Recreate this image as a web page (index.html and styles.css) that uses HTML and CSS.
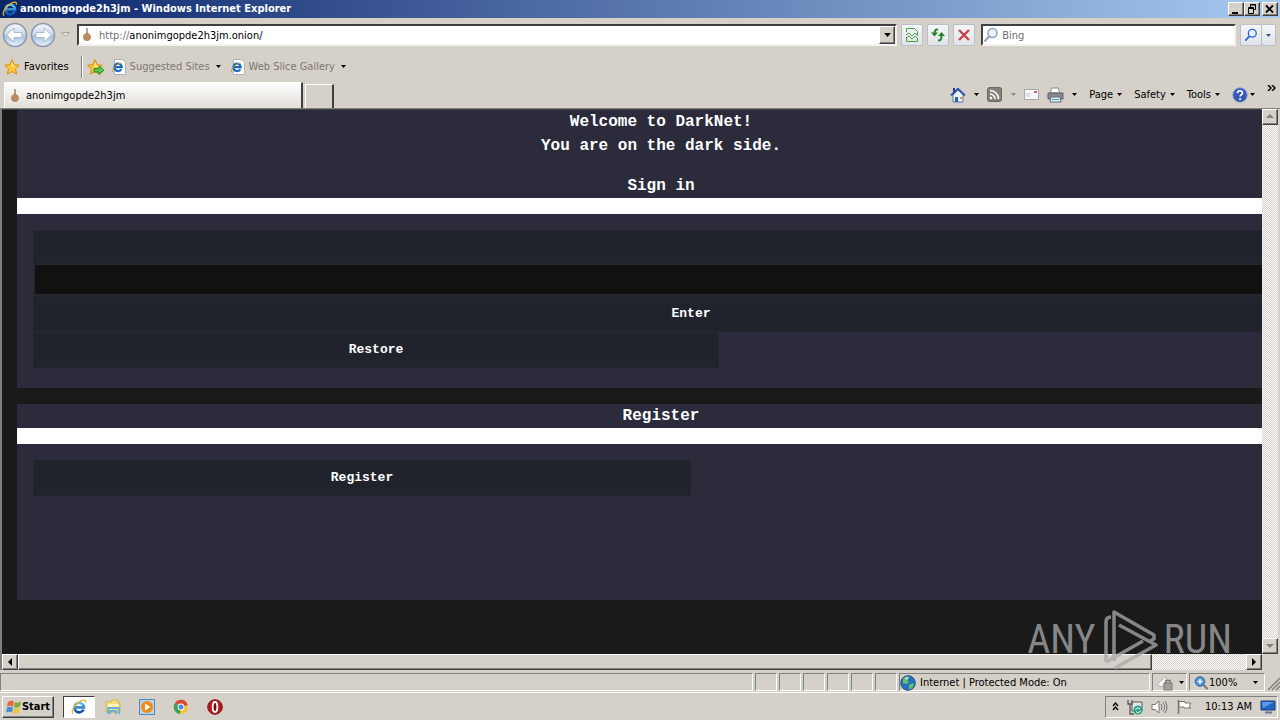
FILE: index.html
```html
<!DOCTYPE html>
<html lang="en">
<head>
    <meta charset="UTF-8">
    <meta name="viewport" content="width=device-width, initial-scale=1.0">
    <title>anonimgopde2h3jm</title>
    <link rel="stylesheet" href="styles.css">
</head>
<body>
    <!-- shared icons -->
    <svg width="0" height="0" class="defs" aria-hidden="true">
        <defs>
            <linearGradient id="ball" x1="0" y1="0" x2="0" y2="1">
                <stop offset="0" stop-color="#f4f8fc"/>
                <stop offset="0.45" stop-color="#cfdcec"/>
                <stop offset="0.55" stop-color="#a9c0dc"/>
                <stop offset="1" stop-color="#eaf6ff"/>
            </linearGradient>
            <linearGradient id="blue" x1="0" y1="0" x2="0" y2="1">
                <stop offset="0" stop-color="#5cc4f4"/>
                <stop offset="1" stop-color="#0a4fb4"/>
            </linearGradient>
        </defs>
        <symbol id="ie" viewBox="0 0 16 16">
            <path d="M12.600 10.500A4.800 4.800 0 1 1 13 8.400H4.500" fill="none" stroke="url(#blue)" stroke-width="2.600"/>
            <path d="M2.200 14.600C-1 13 4 4.500 10 1.800c3.500-1.500 5-.4 4.200 2" fill="none" stroke="#e6b422" stroke-width="1.300"/>
        </symbol>
        <symbol id="ie-page" viewBox="0 0 16 16">
            <path d="M3.500 .5h8l3 3v12h-11z" fill="#fff" stroke="#a9b2bd"/>
            <path d="M10.300 10.200A3.700 3.700 0 1 1 10.800 8.200H4" fill="none" stroke="#1769c4" stroke-width="2.200"/>
            <path d="M1.600 13C0 11 5 4.500 11 4" fill="none" stroke="#d8a51c"/>
        </symbol>
        <symbol id="onion" viewBox="0 0 16 16">
            <path d="M8 1v6" stroke="#8a6a48" stroke-width="1.200"/>
            <path d="M8 5c1 1.500 4 2 4 5 0 2.500-2 4-4 4s-4-1.500-4-4c0-3 3-3.500 4-5z" fill="#b98a62"/>
        </symbol>
        <symbol id="star" viewBox="0 0 16 16">
            <path d="M8 .8l2.200 4.900 5.200.6-3.900 3.600 1.100 5.300L8 12.500l-4.600 2.700 1.100-5.300L.6 6.300l5.200-.6z" fill="#ffc83a" stroke="#d98e14"/>
            <path d="M8 3l1.400 3.600L12 7 8 8z" fill="#fff3b0"/>
        </symbol>
        <symbol id="caret" viewBox="0 0 5 3"><path d="M0 0h5L2.500 3z" fill="currentColor"/></symbol>
        <symbol id="lens" viewBox="0 0 16 16">
            <circle cx="9.500" cy="6" r="4.500" fill="#e8f2fb" stroke="currentColor" stroke-width="1.500"/>
            <path d="M6.300 9.300L1.500 14.500" stroke="currentColor" stroke-width="2"/>
        </symbol>
    </svg>

    <header class="titlebar">
        <svg class="icon"><use href="#ie"/></svg>
        <span class="window-title">anonimgopde2h3jm - Windows Internet Explorer</span>
        <div class="window-buttons">
            <button class="raised" aria-label="Minimize"><svg width="10" height="10"><path d="M1 8h6v2H1z"/></svg></button>
            <button class="raised" aria-label="Restore window"><svg width="10" height="10" fill="none" stroke="#000"><path d="M3.500 3V.5h5v5H7M3 1h6M1.500 3.500h5v6h-5zM1 4.500h6"/></svg></button>
            <button class="raised close" aria-label="Close"><svg width="10" height="10"><path d="M1 1.500l7 7M8 1.500l-7 7" stroke="#000" stroke-width="1.800"/></svg></button>
        </div>
    </header>

    <nav class="navbar">
        <button class="ball" aria-label="Back">
            <svg width="26" height="26"><circle cx="13" cy="13" r="11.500" fill="url(#ball)" stroke="#8b9ab0" stroke-width="1.500"/><path d="M4.500 13l7.500-7v4.500h8v5h-8V20z" fill="#fff" stroke="#a9bcd4"/></svg>
        </button>
        <button class="ball" aria-label="Forward">
            <svg width="26" height="26"><circle cx="13" cy="13" r="11.500" fill="url(#ball)" stroke="#8b9ab0" stroke-width="1.500"/><path d="M21.500 13L14 6v4.500H6v5h8V20z" fill="#fff" stroke="#a9bcd4"/></svg>
        </button>
        <button class="recent" aria-label="Recent pages"><svg width="9" height="6"><path d="M.5 .5h8l-4 4z" fill="#e2ded8" stroke="#aaa59c"/></svg></button>
        <div class="field address">
            <svg class="icon"><use href="#onion"/></svg>
            <label for="address">http://</label>
            <input type="text" id="address" value="anonimgopde2h3jm.onion/">
            <button class="raised drop" aria-label="Show addresses"><svg class="caret big"><use href="#caret"/></svg></button>
        </div>
        <button class="tool" aria-label="Compatibility view"><svg width="14" height="16" fill="none" stroke="#46a049"><path d="M1.500 5V1.500h8l3 3V9M1.500 10v4.500h11V12M1 8l3-2 3 3 3-3 3 3M1 11l3-2 3 3 3-3 3 3"/></svg></button>
        <button class="tool" aria-label="Refresh"><svg width="16" height="16" fill="none" stroke="#23842a" stroke-width="2"><path d="M8 2.500C5.500 2 4.500 4 4.500 7M8 13.500c2.500.5 3.500-1.500 3.500-4.500"/><path d="M1 5.500h7L4.500 9.500zM8 9h7l-3.500-4z" fill="#23842a" stroke="none"/></svg></button>
        <button class="tool" aria-label="Stop"><svg width="14" height="14"><path d="M2 2l10 10M12 2L2 12" stroke="#c8434a" stroke-width="2.400"/></svg></button>
        <div class="field search">
            <svg class="icon"><use href="#lens"/></svg>
            <input type="text" placeholder="Bing" aria-label="Search Bing">
        </div>
        <div class="search-buttons">
            <button class="tool go" aria-label="Search"><svg class="icon small"><use href="#lens"/></svg></button>
            <button class="tool more" aria-label="Search options"><svg class="caret"><use href="#caret"/></svg></button>
        </div>
    </nav>

    <div class="favorites">
        <button class="flat fav"><svg class="icon"><use href="#star"/></svg>Favorites</button>
        <span class="divider"></span>
        <button class="flat add" aria-label="Add to Favorites bar"><svg width="18" height="16" viewBox="0 0 18 16"><use href="#star" width="16" height="16"/><path d="M7 9.500h5V7l5 4.200-5 4.300V13H7z" fill="#5fc548" stroke="#2d8a24"/></svg></button>
        <button class="flat muted"><svg class="icon"><use href="#ie-page"/></svg>Suggested Sites<svg class="caret"><use href="#caret"/></svg></button>
        <button class="flat muted"><svg class="icon"><use href="#ie-page"/></svg>Web Slice Gallery<svg class="caret"><use href="#caret"/></svg></button>
    </div>

    <div class="tabs">
        <button class="tab"><svg class="icon"><use href="#onion"/></svg>anonimgopde2h3jm</button>
        <button class="new-tab" aria-label="New tab"></button>
        <div class="commands">
            <button class="flat home" aria-label="Home"><svg width="16" height="16"><path d="M3 8v7h10V8L8 3z" fill="#e9f1fb" stroke="#5a78b0"/><path d="M1 8.500L8 1.800l7 6.700" fill="none" stroke="#2f57ac" stroke-width="1.800"/><path d="M3 1h2v4H3z" fill="#263f88"/><path d="M5 10h3v5H5z" fill="#2f62a8"/><path d="M10 10h2v2h-2z" fill="#d8962a"/></svg><svg class="caret"><use href="#caret"/></svg></button>
            <button class="flat feeds" aria-label="Feeds"><svg width="15" height="15"><rect x=".5" y=".5" width="14" height="14" rx="2" fill="#85827e" stroke="#69665f"/><path d="M3 7a5 5 0 0 1 5 5M3 3.500A8.500 8.500 0 0 1 11.500 12" fill="none" stroke="#fff" stroke-width="1.600"/><circle cx="4" cy="11" r="1.300" fill="#fff"/></svg><svg class="caret"><use href="#caret"/></svg></button>
            <button class="flat mail" aria-label="Read mail"><svg width="15" height="11"><path d="M.5 .5h14v10H.5z" fill="#f6f6f8" stroke="#aaa8a8"/><path d="M10 2h3v2h-3z" fill="#cf5b66"/><path d="M2 5h5M2 7h4" stroke="#cacad2"/></svg></button>
            <button class="flat print" aria-label="Print"><svg width="17" height="16"><path d="M4.500 1h7l1 5h-9z" fill="#fff" stroke="#8b8b8b"/><path d="M1 6h15v6H1z" fill="#85898e" stroke="#5d6268"/><path d="M4 10h9l1 5H3z" fill="#e4eef2" stroke="#617078"/><path d="M5 12.500h7" stroke="#40a0b0"/></svg><svg class="caret"><use href="#caret"/></svg></button>
            <button class="flat">Page<svg class="caret"><use href="#caret"/></svg></button>
            <button class="flat">Safety<svg class="caret"><use href="#caret"/></svg></button>
            <button class="flat">Tools<svg class="caret"><use href="#caret"/></svg></button>
            <button class="flat help" aria-label="Help"><svg width="16" height="16"><circle cx="8" cy="8" r="7.300" fill="#3458b4" stroke="#96aad8"/><path d="M5.500 6.200c0-3.200 5-3.200 5-.2 0 1.800-2.400 1.700-2.400 3.600" fill="none" stroke="#fff" stroke-width="1.700"/><circle cx="8.100" cy="12" r="1.100" fill="#fff"/></svg><svg class="caret"><use href="#caret"/></svg></button>
            <button class="flat overflow" aria-label="More commands"><svg width="9" height="6" fill="none" stroke="#000" stroke-width="1.500"><path d="M1 0l3 3-3 3M5 0l3 3-3 3"/></svg></button>
        </div>
    </div>

    <div class="browser">
        <main class="viewport">
            <div class="page">
                <section class="block">
                    <h1>Welcome to DarkNet!<br>You are on the dark side.</h1>
                    <h2>Sign in</h2>
                    <div class="line"></div>
                    <form class="panel">
                        <input type="text" class="wide login" aria-label="Login">
                        <input type="password" class="wide password" aria-label="Password">
                        <button type="button" class="wide">Enter</button>
                        <button type="button" class="restore">Restore</button>
                    </form>
                </section>
                <section class="block">
                    <h2>Register</h2>
                    <div class="line"></div>
                    <div class="panel tall">
                        <button type="button" class="register">Register</button>
                    </div>
                </section>
            </div>
        </main>
        <div class="scroll vertical">
            <button class="raised" aria-label="Scroll up"><svg class="arrow off"><path d="M0 5h8L4 1z"/></svg></button>
            <button class="raised" aria-label="Scroll down"><svg class="arrow off"><path d="M0 2h8L4 6z"/></svg></button>
        </div>
        <div class="scroll horizontal">
            <button class="raised" aria-label="Scroll left"><svg class="arrow"><path d="M6 0v8L2 4z"/></svg></button>
            <div class="track"><div class="raised thumb"></div></div>
            <button class="raised" aria-label="Scroll right"><svg class="arrow"><path d="M2 0v8l4-4z"/></svg></button>
        </div>
        <div class="watermark">
            <span>ANY</span>
            <svg width="56" height="62" viewBox="0 0 56 62" fill="none" stroke="currentColor" stroke-width="3.500" stroke-linejoin="round">
                <path d="M4 53V13q0-5 5-5M12 50V3l40 23v4l-4 2"/>
                <path d="M17 16l37 20L13 59M4 53l37-21M12 40v12"/>
            </svg>
            <span>RUN</span>
        </div>
    </div>

    <footer class="status">
        <div class="pane grow"></div>
        <div class="pane"></div>
        <div class="pane"></div>
        <div class="pane"></div>
        <div class="pane"></div>
        <div class="pane"></div>
        <div class="pane"></div>
        <div class="pane zone">
            <svg width="16" height="16"><circle cx="8" cy="8" r="7.300" fill="#2372bd" stroke="#24578c"/><path d="M3 4c2-3 5-3 6-2L7 5l2 2-2 2-4-1zM9 10l4-2 1 2-3 4H9z" fill="#65c464"/><path d="M5 3l4-1-2 3z" fill="#c9eef0"/></svg>
            Internet | Protected Mode: On
        </div>
        <div class="pane privacy">
            <svg width="18" height="16"><path d="M1 10l8-8 2 2-5 8z" fill="#f6f6f6" stroke="#b6b2ac"/><path d="M8 8h8v7H8z" fill="#a2a09d" stroke="#7a7875"/><path d="M10 8V5.500h4V8" fill="none" stroke="#7a7875" stroke-width="1.500"/></svg>
            <svg class="caret"><use href="#caret"/></svg>
        </div>
        <div class="pane zoom">
            <svg width="14" height="14"><circle cx="6" cy="5.500" r="4.800" fill="#4f92df" stroke="#3465a8"/><path d="M6 3v5M3.500 5.500h5" stroke="#fff" stroke-width="1.500"/><path d="M9.500 9l4 4" stroke="#7c7467" stroke-width="2"/></svg>
            <span>100%</span>
            <svg class="caret"><use href="#caret"/></svg>
        </div>
        <svg class="grip" width="13" height="16"><path d="M1 15L13 3M5 15l8-8M9 15l4-4" stroke="#808080" stroke-width="1.500"/></svg>
    </footer>

    <footer class="taskbar">
        <button class="raised start">
            <svg width="16" height="16"><path d="M2 3q3-2 6-.5L7 7.500Q4 6 1 7.500z" fill="#e66a34"/><path d="M9 3q3 1.500 6-.5l-1 5q-3 2-6 .5z" fill="#78ae3e"/><path d="M1 8.500q3-1.500 6 0L6 13.500q-3-1.500-6 0z" fill="#4a8cd6"/><path d="M8 9q3 1.500 6-.5l-1 5q-3 2-6 .5z" fill="#f4c332"/></svg>Start
        </button>
        <div class="apps">
            <button class="app active" aria-label="Internet Explorer"><svg class="icon"><use href="#ie"/></svg></button>
            <button class="app" aria-label="Explorer"><svg width="16" height="16"><path d="M1 3h5l1-2h6v3h2v9H1z" fill="#f3dc82" stroke="#d5b34d"/><path d="M3 5h10v5H3z" fill="#fdf4c2"/><path d="M3 15V9h11v6M5 15v-3h6v3" fill="none" stroke="#68afd8" stroke-width="1.800"/></svg></button>
            <button class="app" aria-label="Media Player"><svg width="16" height="16"><path d="M.5 .5h15v15H.5z" fill="#b6d5ed" stroke="#4e8ac0"/><circle cx="8" cy="8" r="6" fill="#f18a1b"/><path d="M6 4.500l5.500 3.500L6 11.500z" fill="#fff"/></svg></button>
            <button class="app" aria-label="Chrome"><svg width="16" height="16"><circle cx="8" cy="8" r="7" fill="#f6c62d"/><path d="M8 8L2 4a7 7 0 0 1 12.700 2z" fill="#da4737"/><path d="M8 8L2 4a7 7 0 0 0 5 11z" fill="#3d9f58"/><circle cx="8" cy="8" r="3.400" fill="#fff"/><circle cx="8" cy="8" r="2.500" fill="#4688e8"/></svg></button>
            <button class="app" aria-label="Opera"><svg width="16" height="16"><circle cx="8" cy="8" r="7.300" fill="#b51a1e" stroke="#801216"/><ellipse cx="8" cy="8" rx="2.300" ry="5" fill="#7a0c10" stroke="#fff" stroke-width="1.800"/></svg></button>
        </div>
        <div class="tray">
            <svg width="7" height="9" fill="none" stroke="#000" stroke-width="1.300"><path d="M1 4l2.500-3L6 4M1 8l2.500-3L6 8"/></svg>
            <svg width="16" height="16"><path d="M5 3h10v9H5z" fill="#dfe6e8" stroke="#55595c"/><path d="M1 1v4h4V1M3 5v10h4" fill="none" stroke="#55595c" stroke-width="1.300"/><circle cx="11" cy="11" r="4.500" fill="#29a384"/><path d="M8.500 11a2.500 2.500 0 0 1 4.500-1M13.500 11.500a2.500 2.500 0 0 1-4.500 1" fill="none" stroke="#fff"/></svg>
            <svg width="17" height="16" fill="none" stroke="#77746f"><path d="M1 5.500h3L8 2v12l-4-3.500H1z" fill="#fff"/><path d="M10 5q2 3 0 6M12 3.500q3.500 4.500 0 9M14 2q4 6 0 12"/></svg>
            <svg width="17" height="16"><path d="M2.500 1v14" stroke="#77746f" stroke-width="1.500"/><path d="M3 2.500h6v1.500h6l-2 3 2 2H8V8H3z" fill="#fff" stroke="#77746f"/></svg>
            <time>10:13 AM</time>
            <svg width="16" height="14"><path d="M1 1h14v9H1z" fill="#2464c4" stroke="#173d80"/><path d="M2 2h12L3 8z" fill="#5b9bea"/><path d="M5 12.500h7" stroke="#6c7a94" stroke-width="2"/></svg>
        </div>
    </footer>
</body>
</html>
```

FILE: styles.css
```css
* {
    box-sizing: border-box;
}

body {
    margin: 0;
    min-height: 100vh;
    display: flex;
    flex-direction: column;
    background: #d5d0c8;
    color: #000;
    font-family: "DejaVu Sans Condensed", "DejaVu Sans", Tahoma, sans-serif;
    font-size: 11px;
    line-height: 14px;
    overflow: hidden;
}

button,
input {
    font: inherit;
    color: inherit;
    margin: 0;
    padding: 0;
    border: none;
    border-radius: 0;
    outline: none;
}

button {
    display: flex;
    align-items: center;
    justify-content: center;
    background: none;
    white-space: nowrap;
}

svg {
    display: block;
    flex: none;
}

.defs {
    position: absolute;
}

.icon {
    width: 16px;
    height: 16px;
}

.small {
    width: 14px;
    height: 14px;
}

.caret {
    width: 5px;
    height: 3px;
    color: #000;
}

.caret.big {
    width: 7px;
    height: 4px;
}

.raised {
    background: #d5d0c8;
    border: 1px solid;
    border-color: #fff #404040 #404040 #fff;
    box-shadow: inset -1px -1px #808080;
}

/* title bar */
.titlebar {
    height: 18px;
    display: flex;
    align-items: center;
    gap: 2px;
    padding: 0 2px;
    background: linear-gradient(to right, #0a246a, #a6caf0);
    color: #fff;
    font-weight: bold;
}

.window-title {
    flex: 1;
}

.window-buttons {
    display: flex;
}

.window-buttons button {
    width: 16px;
    height: 14px;
}

.window-buttons .close {
    margin-left: 2px;
}

/* address row */
.navbar {
    height: 34px;
    display: flex;
    align-items: center;
    gap: 4px;
    padding: 0 4px 0 2px;
}

.ball {
    width: 26px;
    height: 26px;
}

.ball + .ball {
    margin-left: -2px;
}

.recent {
    width: 9px;
    margin-left: 1px;
}

.field {
    display: flex;
    align-items: center;
    height: 22px;
    background: #fff;
    border: 2px solid;
    border-color: #404040 #f4f2ee #f4f2ee #404040;
    color: #000;
}

.field label,
.field input {
    padding-top: 2px;
}

.field input {
    flex: 1;
    min-width: 0;
    background: none;
}

.field label,
.field input::placeholder {
    color: #707070;
    opacity: 1;
}

.address {
    flex: 1;
    margin-left: 3px;
}

.address label {
    margin-left: 4px;
}

.drop {
    width: 16px;
    height: 18px;
}

.tool {
    width: 22px;
    height: 22px;
    background: linear-gradient(#f5f5f5, #e0e3e8);
    border: 1px solid #b9bec8;
    border-radius: 2px;
}

.search {
    width: 20%;
    margin-left: 2px;
    color: #8fa2b4;
}

.search .icon {
    margin-right: 3px;
}

.search-buttons {
    display: flex;
}

.go {
    color: #2865d8;
}

.more {
    width: 14px;
    border-left: none;
}

.more .caret {
    color: #2a5792;
}

/* favorites bar */
.favorites {
    height: 29px;
    display: flex;
    align-items: center;
    padding-left: 4px;
}

.flat {
    gap: 4px;
}

.divider {
    width: 2px;
    height: 22px;
    margin: 0 4px 0 12px;
    border-left: 1px solid #808080;
    border-right: 1px solid #fff;
}

.add {
    margin-right: 6px;
}

.muted {
    color: #7d7972;
    gap: 3px;
    margin-right: 9px;
}

.muted .caret {
    margin-left: 3px;
}

/* tabs and command bar */
.tabs {
    height: 27px;
    display: flex;
    align-items: flex-end;
    padding-left: 4px;
}

.tab {
    width: 299px;
    height: 26px;
    gap: 3px;
    padding: 1px 0 0 2px;
    justify-content: flex-start;
    background: linear-gradient(#fdfdfc, #e3dfd9);
    border-top: 1px solid #fff;
    border-left: 1px solid #fff;
    border-right: 2px solid #404040;
}

.new-tab {
    width: 29px;
    height: 24px;
    margin-left: 2px;
    border: 1px solid #fff;
    border-right: 2px solid #404040;
    border-bottom: none;
}

.commands {
    height: 27px;
    margin-left: auto;
    padding-right: 4px;
    display: flex;
    align-items: center;
    gap: 12px;
}

.home,
.print {
    gap: 8px;
}

.home {
    margin-right: -4px;
}

.feeds {
    gap: 9px;
}

.feeds .caret {
    color: #8c8882;
}

.commands .mail,
.commands .print {
    margin-left: -4px;
}

.help {
    gap: 2px;
}

.overflow {
    align-self: flex-start;
    padding-top: 4px;
}

/* page area with its scrollbars */
.browser {
    flex: 1;
    position: relative;
    display: grid;
    grid-template: minmax(0, 1fr) 16px / minmax(0, 1fr) 16px;
    padding-right: 2px;
    border-top: 1px solid #808080;
    border-left: 2px solid #808080;
}

.viewport {
    overflow: hidden;
    background: #1a1a1a;
    border-top: 1px solid #404040;
}

.page {
    width: calc(100% + 43px);
    padding-left: 15px;
    color: #fff;
    font-family: "Liberation Mono", "Courier New", monospace;
    font-size: 16px;
    font-weight: bold;
    line-height: 24px;
    text-align: center;
}

.page h1,
.page h2 {
    margin: 0;
    font-size: 16px;
}

.page h1 {
    padding-bottom: 16px;
}

.block {
    margin-bottom: 16px;
    background: #2b2b3b;
}

.line {
    height: 16px;
    background: #fff;
}

.panel {
    display: flex;
    flex-direction: column;
    align-items: flex-start;
    height: 174px;
    padding: 16px;
}

.panel.tall {
    height: 156px;
}

.panel input,
.panel button {
    height: 36px;
    background: #21232c;
    border: 1px solid #25272f;
    font-size: 13px;
}

.panel .wide {
    width: calc(100% + 60px);
    flex: none;
}

.panel .login {
    height: 34px;
}

.panel .password {
    height: 32px;
    background: #111;
    border-width: 1px 2px 2px;
}

.panel .restore {
    width: 686px;
}

.panel .register {
    width: 658px;
}

.scroll {
    display: flex;
    justify-content: space-between;
    background: repeating-conic-gradient(#fff 0 25%, #d5d0c8 0 50%) 0 0 / 2px 2px;
}

.vertical {
    flex-direction: column;
}

.scroll button {
    width: 16px;
    height: 16px;
}

.arrow {
    width: 8px;
    height: 8px;
}

.arrow.off {
    fill: #808080;
}

.track {
    flex: 1;
}

.thumb {
    height: 16px;
    margin-right: 94px;
}

/* overlay in the corner of the page */
.watermark {
    position: absolute;
    right: 48px;
    bottom: -1px;
    display: flex;
    align-items: center;
    gap: 6px;
    color: #aaa;
    opacity: 0.75;
    font-family: "Roboto Condensed", "Liberation Sans Narrow", "Roboto", sans-serif;
    font-size: 40px;
    font-weight: 400;
    line-height: 60px;
}

/* status bar */
.status {
    height: 23px;
    display: flex;
    gap: 2px;
    padding: 3px 0 1px;
    border-bottom: 1px solid #fff;
}

.pane {
    width: 22px;
    display: flex;
    align-items: center;
    gap: 5px;
    padding-top: 1px;
    border: 1px solid;
    border-color: #808080 #fff #fff #808080;
}

.grow {
    flex: 1;
}

.zone {
    width: 251px;
    gap: 4px;
}

.privacy {
    width: 35px;
    padding-left: 3px;
}

.zoom {
    width: 76px;
    padding: 1px 6px 0 4px;
    gap: 1px;
}

.zoom .caret {
    margin-left: auto;
}

.grip {
    align-self: flex-end;
}

/* taskbar */
.taskbar {
    height: 27px;
    display: flex;
    align-items: center;
    padding: 0 2px;
}

.start {
    width: 52px;
    height: 22px;
    font-weight: bold;
}

.apps {
    flex: 1;
    display: flex;
    gap: 2px;
    margin-left: 9px;
}

.app {
    width: 32px;
    height: 22px;
}

.app.active {
    background: #fff;
    border: 1px solid;
    border-color: #404040 #fff #fff #404040;
}

.tray {
    height: 22px;
    display: flex;
    align-items: center;
    gap: 8px;
    padding: 0 1px 0 6px;
    border: 1px solid;
    border-color: #808080 #fff #fff #808080;
}

.tray time {
    margin-left: 4px;
}
```
